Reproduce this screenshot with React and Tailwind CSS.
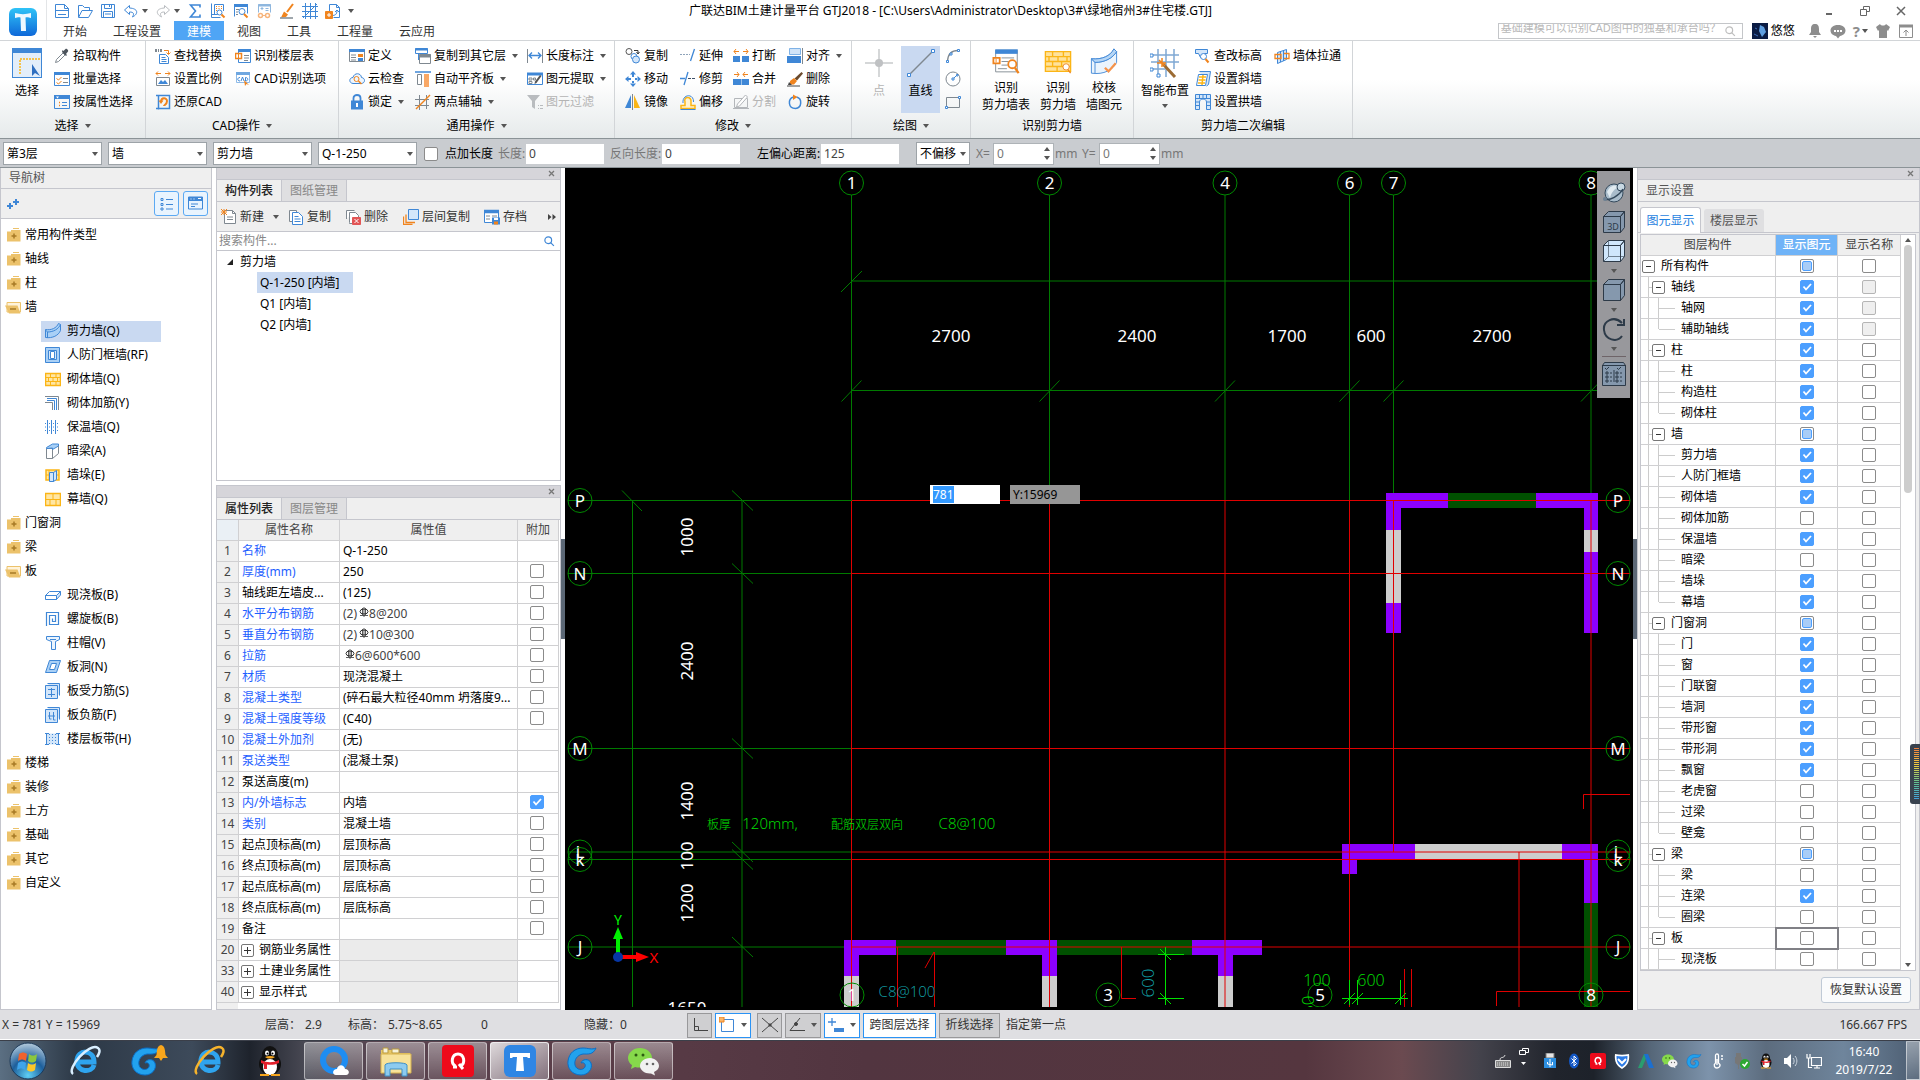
import { useEffect, useRef } from "react";

const B = "#3f87d6";
const L = "#d3e6fa";
const O = "#f0841e";
const Y = "#fbb516";
const G = "#7f8890";

// 16x16 icon drawings
const ICONS = {
  newFile: (
    <g fill="none" stroke={B}>
      <path d="M1.500 1.500h9l4 4v9h-13z" />
      <path d="M10.500 1.500v4h4M2 7.500h12M4 11.500h8" />
    </g>
  ),
  open: (
    <g fill="none" stroke={B}>
      <path d="M1.500 14V2.500h4l2 2h5v3" />
      <path d="M1.500 14.500l3.500-7h10.500l-4 7z" />
    </g>
  ),
  save: (
    <g fill="none" stroke={B}>
      <path d="M1.500 1.500h13v13h-13z" />
      <path d="M4.500 1.500v4h7v-4M3.500 14.500v-6h9v6M5 11h6M9.500 2v2" />
    </g>
  ),
  undo: (
    <path
      d="M6.500 2.500L1.500 7l5 4.500V9c4 0 5 1.500 3 5 6-3 6-8.500-3-9z"
      fill="none"
      stroke={B}
    />
  ),
  redo: (
    <path
      d="M9.500 2.500l5 4.500-5 4.500V9c-4 0-5 1.500-3 5-6-3-6-8.500 3-9z"
      fill="none"
      stroke="#b9bcc0"
    />
  ),
  sigma: (
    <path
      d="M13 4.500V2H3.500L8.500 8l-5 6H13v-2.500"
      fill="none"
      stroke={B}
      strokeWidth="1.6"
    />
  ),
  measure: (
    <g fill="none" stroke={B}>
      <path d="M1.500 .500v14h9M1.500 11.500h7M4.500 11V1.500h9V8" />
      <path d="M6.500 3v5M9 3v4M11.500 3v3" stroke={O} strokeDasharray="1 1" />
      <circle cx="9.500" cy="9.500" r="2.500" fill="#fff" />
      <path d="M11.500 11.500l3 3" stroke={O} strokeWidth="2" />
    </g>
  ),
  report: (
    <g fill="none" stroke={B}>
      <path d="M1.500 13.500V1.500h13v9" />
      <path d="M1 2.500h14" strokeWidth="3" />
      <path d="M3 6.500h3M3 9h2M3 11.500h2" stroke={G} />
      <circle cx="9" cy="8.500" r="3" fill="#fff" />
      <path d="M11 11l3.500 3.500" stroke={O} strokeWidth="2" />
    </g>
  ),
  ledger: (
    <g fill="none" stroke="#8fb7de">
      <path d="M2.500 9.500v-8h12v8" />
      <path d="M2 2.500h13" strokeWidth="2" />
      <path d="M4.500 5.500h3M6 4v3M9.500 5.500h3M9.500 7.500h3" />
      <circle cx="4.500" cy="12.500" r="2" stroke="#f6b47c" strokeWidth="1.500" />
      <circle cx="11.500" cy="12.500" r="2" stroke="#f6b47c" strokeWidth="1.500" />
      <path d="M6.500 12.500h3" stroke="#f6b47c" />
    </g>
  ),
  sweep: (
    <g fill="none">
      <path d="M14 1L8 9" stroke={O} strokeWidth="2" />
      <path d="M5 8.500l4 3-2 2.500-5 .500z" fill={O} />
      <path d="M1 15h13" stroke={G} strokeWidth="1.500" />
    </g>
  ),
  gridLines: (
    <path
      d="M0 3.500h16M0 8.500h16M0 13.500h16M3.500 0v16M8.500 0v16M13.500 0v16M1 15L15 1"
      stroke={B}
      fill="none"
    />
  ),
  addDoc: (
    <g fill="none" stroke={B}>
      <path d="M4.500 8V1.500h7l3 3v10h-6M11.500 1.500v3h3" />
      <path d="M7 12.500c3 0 5-1 5-5M10 9l2-2 2 2" />
      <path d="M.500 8.500h7v7h-7z" fill={O} stroke={O} />
      <path d="M4 10v4M2 12h4" stroke="#fff" />
    </g>
  ),
  dropper: (
    <g>
      <path d="M1.500 14.500l1-3L9 5l2 2-6.500 6.500z" fill="#fff" stroke={G} />
      <path d="M8 4l4 4 1-1-1-1 2-2.500c1-1-1.500-3.500-2.500-2.500L9.500 3l-1-1z" fill="#4c545c" />
    </g>
  ),
  batch: (
    <g fill="none" stroke={B}>
      <path d="M.500 1.500h15v13H.500z" />
      <path d="M0 2.500h16" strokeWidth="3" />
      <path d="M9 7.500h5M9 11.500h5" stroke={G} />
      <path d="M2.500 7.500l2 1.500 3-3M2.500 11.500l2 1.500 3-3" stroke={O} />
    </g>
  ),
  byProp: (
    <g fill="none" stroke={B}>
      <path d="M.500 1.500h15v13H.500z" />
      <path d="M0 3h16" strokeWidth="4" />
      <path d="M5 8.500h1M5 11.500h1" stroke={O} strokeWidth="1.500" />
      <path d="M8 8.500h5M8 11.500h5" />
      <path d="M2 2.500h3l-1.500 2z" fill="#fff" stroke="none" />
    </g>
  ),
  findReplace: (
    <g fill="none">
      <path d="M0 1h7v3H0z" fill={G} />
      <path d="M2.500 1v3M4.500 1v3" stroke="#fff" />
      <path d="M9 2.500h4.500V6M11.500 4.500l2 2 2-2" stroke={O} />
      <path d="M4.500 6.500h6l3 3v6h-9z" fill="#fff" stroke={B} />
      <path d="M6.500 9.500h4M6.500 11.500h5M6.500 13.500h5" stroke={B} />
    </g>
  ),
  ratio: (
    <g fill="none">
      <path d="M1 2.500h5M10 2.500h5M3 .500L1 2.500l2 2M13 .500l2 2-2 2" stroke={O} />
      <path d="M1.500 6.500h13v8h-13z" fill="#fff" stroke={G} />
      <path d="M3 13l3-4 2 2 2-2 3 4z" fill={B} />
    </g>
  ),
  restore: (
    <g fill="none">
      <path d="M3.500 1v14.500M1 14.500h13.500V1.500H1" stroke={B} strokeWidth="1.500" />
      <path d="M6 8c0-5 6-4.500 6-1s-3 4-3 5" stroke={O} strokeWidth="2" />
      <path d="M3.500 6.500h5L6 10z" fill={O} />
    </g>
  ),
  floorTable: (
    <g fill="none">
      <path d="M3.500 2.500h12v12h-12z" stroke={B} />
      <path d="M3 2.500h13" stroke={B} strokeWidth="3" />
      <path d="M9 7.500h5M9 10h5M9 12.500h4" stroke={G} />
      <path d="M.500 5.500h6v5h-6z" fill="#fff" stroke={O} strokeWidth="1.500" />
      <path d="M3.500 6v4" stroke={O} />
    </g>
  ),
  cadOption: (
    <g fill="none">
      <path d="M1.500 2.500h13v9h-13z" stroke="#8ebbe8" />
      <path d="M1 2.500h14" stroke="#6fa7e0" strokeWidth="3" />
      <path d="M5 6.500c-3 0-3 3.500 0 3.500M6 10l1.500-4L9 10M10.500 6.500v3.500c3 0 3-3.500 0-3.500" stroke={B} />
      <path d="M9 9l1 6 1.500-2 2.500 1z" fill={O} />
    </g>
  ),
  define: (
    <g fill="none">
      <path d="M.500 1.500h15v12H.500z" fill="#fff" stroke={G} />
      <path d="M0 2.500h16" stroke={B} strokeWidth="3" />
      <path d="M2 7h5M2 9.500h5M2 12h5" stroke={G} />
      <path d="M9 6h5v3H9z" fill={O} />
      <path d="M9 10h5v3H9z" fill={B} />
    </g>
  ),
  cloudCheck: (
    <g fill="none">
      <path d="M4 12.500c-4.500-.500-4-6 0-6 1-5 8-5 8.500 0 4 .500 4 5.500 0 6z" stroke={B} fill="#eef6fe" />
      <circle cx="7.500" cy="8" r="2.500" stroke={O} />
      <path d="M9.500 10l3 3" stroke={O} strokeWidth="1.500" />
    </g>
  ),
  lock: (
    <g fill="none">
      <path d="M4.500 7V4c0-4 7-4 7 0v3" stroke={B} strokeWidth="1.800" />
      <path d="M2 6.500h12v9H2z" fill={B} />
      <path d="M8 9v4" stroke="#fff" strokeWidth="2" />
    </g>
  ),
  copyLayer: (
    <g fill="none">
      <path d="M3.500 12V5M.500 .500h12v5H.500z" fill="#fff" stroke={B} />
      <path d="M0 1.500h13" stroke={B} strokeWidth="2" />
      <path d="M4.500 6.500h11v9h-11z" fill="#fff" stroke={G} />
      <path d="M4 8h12" stroke={G} strokeWidth="3" />
    </g>
  ),
  align: (
    <g>
      <path d="M0 1h16" stroke={B} strokeWidth="1.500" />
      <path d="M2.500 3.500h4v10h-4z" fill="#fff" stroke={G} />
      <path d="M9 3h5v13H9z" fill="#f9a866" />
    </g>
  ),
  twoPoint: (
    <g fill="none" stroke={G}>
      <path d="M0 5.500h14M0 11.500h14M4.500 1v15M11.500 1v14" />
      <path d="M1 15L15 1" stroke={O} strokeWidth="1.500" />
    </g>
  ),
  lengthDim: (
    <g fill="none" stroke={B}>
      <path d="M.500 1v14M15.500 1v14" stroke={G} />
      <path d="M2 7.500h12M5 4.500l-3 3 3 3M11 4.500l3 3-3 3" strokeWidth="1.300" />
    </g>
  ),
  extract: (
    <g fill="none">
      <path d="M.500 2.500h15v11H.500z" fill="#fff" stroke={B} />
      <path d="M0 3h16" stroke={B} strokeWidth="3" />
      <path d="M2 7h3v2H2zM2 10.500h3v2H2zM6.500 7h2v2h-2z" stroke={G} />
      <path d="M14.500 5l-5 7-2 1 .500-2.500 5-6.500z" fill="#555" />
    </g>
  ),
  filter: (
    <g fill="#b9bcbf">
      <path d="M0 1h13L8 7v8l-3-2V7z" />
      <path d="M11 11h1v1h-1zM13 11h3v1h-3zM11 14h1v1h-1zM13 14h3v1h-3z" />
    </g>
  ),
  copy: (
    <g fill="none">
      <circle cx="4" cy="3.500" r="3" stroke="#555" />
      <path d="M9 2.500h4v3M11.500 4l1.500 2 1.500-2" stroke="#333" />
      <circle cx="9" cy="8.500" r="3" stroke={B} />
      <circle cx="11" cy="11.500" r="3.500" fill={L} stroke={B} />
    </g>
  ),
  move: (
    <path
      d="M8 0l3 3.500H5zM8 16l3-3.500H5zM0 8l3.500-3v6zM16 8l-3.500-3v6zM7 3h2v3H7zM7 10h2v3H7zM3 7h3v2H3zM10 7h3v2h-3z"
      fill={B}
    />
  ),
  mirror: (
    <g>
      <path d="M6 1v13H0z" fill={B} />
      <path d="M9 1v13h6z" fill={Y} />
      <path d="M7.500 0v16" stroke={G} />
    </g>
  ),
  extend: (
    <g fill="none" stroke={B}>
      <path d="M0 6.500h10" stroke="#8fa4ba" strokeDasharray="2 1" />
      <path d="M14.500 1l-4 12" strokeWidth="1.300" />
    </g>
  ),
  trim: (
    <g fill="none" stroke="#3d5068">
      <path d="M8 1L4 14M0 7.500h5" stroke={B} strokeWidth="1.300" />
      <path d="M8 7.500h8" strokeDasharray="3 1" />
    </g>
  ),
  offset: (
    <g fill="none">
      <path d="M1 11.500h4V8C3 2 12 2 11 8v3.500h4v3H1z" stroke={Y} strokeWidth="1.500" fill="#fff3d2" />
      <path d="M.500 15.500h15M3 9c-1-9 11-10 10.500-1" stroke={B} />
    </g>
  ),
  breakIt: (
    <g>
      <path d="M0 8h7v6H0zM9 8h7v6H9z" fill={B} />
      <path d="M1 3.500h5M10 3.500h5M3 1L1 3.500 3 6M13 1l2 2.500L13 6" stroke={O} fill="none" />
    </g>
  ),
  merge: (
    <g>
      <path d="M0 8h8v6H0zM8.500 8H16v6H8.500z" fill={B} />
      <path d="M1 3.500h5M10 3.500h5M4 1l2 2.500L4 6M12 1l-2 2.500L12 6" stroke={O} fill="none" />
    </g>
  ),
  split: (
    <g fill="none" stroke="#b3b6ba">
      <path d="M1.500 4.500h13v9h-13z" />
      <path d="M12.500 1l2 2-8 9-3 1 1-3z" fill="#fff" />
      <path d="M0 14.500h16" />
    </g>
  ),
  alignTo: (
    <g>
      <path d="M2.500 .500h11v6h-11z" fill="#cfe3f8" stroke="#7fb2e6" />
      <path d="M0 8h14v7H0z" fill={B} />
      <path d="M15.500 0v16" stroke={G} />
    </g>
  ),
  erase: (
    <g>
      <path d="M14.500 1l1.500 1.500-6 7-2.500-2z" fill="#6b4a2c" />
      <path d="M3 10l4-3 3 3-3 3.500H3z" fill={O} />
      <path d="M2 11l3 3H1z" fill="#444" />
      <path d="M0 15h13" stroke="#444" />
    </g>
  ),
  rotate: (
    <g fill="none">
      <path d="M9.500 3C15.500 4.500 15 14 8.500 14.500 1 14.500 .500 5 6.500 3" stroke={B} strokeWidth="1.500" />
      <path d="M6 .500L10.500 3 6 6z" fill={O} />
    </g>
  ),
  arc: (
    <g fill="none">
      <path d="M2.500 13C3 6 7 2.500 13 2.500" stroke={G} strokeWidth="1.300" />
      <path d="M1.500 12.500h2v2h-2zM12.500 1.500h2v2h-2zM5 5h2v2H5z" fill="#fff" stroke={B} />
    </g>
  ),
  circle: (
    <g fill="none">
      <circle cx="8" cy="8" r="7" stroke={G} />
      <path d="M8 8l4-4" stroke={B} />
      <path d="M7 7h2v2H7zM11.500 3.500h1.500v1.500h-1.500z" fill="#fff" stroke={B} />
    </g>
  ),
  rect: (
    <g fill="none">
      <path d="M1.500 3.500h13v10h-13z" stroke={G} />
      <path d="M.500 12.500h2v2h-2zM13.500 2.500h2v2h-2z" fill="#fff" stroke={B} />
    </g>
  ),
  height: (
    <g fill="none">
      <path d="M.500 1.500h12v4h-3l-2 4h-2l-2-4h-3z" fill={L} stroke={B} />
      <circle cx="8.500" cy="8.500" r="3" fill="#fff" stroke={B} />
      <path d="M10.500 11l3 3.500" stroke={O} strokeWidth="2" />
    </g>
  ),
  slant: (
    <g fill="none">
      <path d="M4.500 .500h11l-2 13-2 1.500" fill={L} stroke={B} />
      <path d="M3.500 3.500h9l-2 11h-9z" fill="#fff" stroke={B} />
      <path d="M4 6h7M3.500 9h7M3 12h7M8 4l-1 10" stroke={Y} strokeWidth="1.500" />
    </g>
  ),
  archWall: (
    <g fill="none">
      <path d="M.500 15.500V.500h15v15h-4V8c0-4-7-4-7 0v7.500z" fill={L} stroke={B} />
      <path d="M1 4.500h14M4.500 1v4M8 1v4M11.500 1v4M1 8h3M1 11.500h3M12 8h3M12 11.500h3" stroke={B} />
    </g>
  ),
  wallThrough: (
    <g fill="none" stroke={B}>
      <path d="M3.500 4.500L12.500 1.500v10l-9 4z" fill={L} />
      <path d="M6.500 3v11M9.500 2v11" />
      <path d="M1 6.500h6v4H1zM10 5.500h5v5h-5" stroke={O} strokeWidth="1.300" />
    </g>
  ),
  shear: (
    <g>
      <path d="M.500 6.500c6 1 11-1.500 13-6l2 1v6c-2 5-8 8-15 7z" fill="#a9d0f6" stroke={B} />
      <path d="M.500 7l2 2c6 0 11-3 13-7.500M2.500 9v6" fill="none" stroke={B} />
    </g>
  ),
  frameDoor: (
    <g fill="#a9d0f6" stroke={B}>
      <path d="M.500 .500h14v15H.500z" />
      <path d="M3.500 3.500h8v9h-8z" fill={L} />
      <path d="M5.500 4.500h4v7h-4z" fill="#fff" />
    </g>
  ),
  brick: (
    <g fill="#ffe6a3" stroke={Y}>
      <path d="M.500 2.500h15v12H.500z" strokeWidth="1.500" />
      <path d="M1 6.500h14M1 10.500h14M5.500 3v3.500M11 3v3.500M8 6.500v4M3.500 6.500v4M12.500 6.500v4M5.500 10.500v4M11 10.500v4" />
    </g>
  ),
  brickBar: (
    <g fill="none">
      <path d="M0 1.500h13.500V15M0 7.500h7.500V15" stroke={G} />
      <path d="M2 3.500h9.500V15M2 5.500h7.500V15" stroke={B} />
    </g>
  ),
  insulate: (
    <g fill="none" stroke={B}>
      <path d="M2.500 1v14M6.500 1v14M10.500 1v14" />
      <path d="M0 4.500h13M0 8h13M0 11.500h13" strokeDasharray="1 1" />
    </g>
  ),
  hiddenBeam: (
    <g fill="#fff">
      <path d="M1.500 5.500h6v10h-6z" stroke={G} />
      <path d="M7.500 5.500l6-4v9l-6 5z" stroke={G} />
      <path d="M1.500 5.500v-1l6-3.500h6v2l-6 3.500v-1.500z" fill="#a9d0f6" stroke={B} />
    </g>
  ),
  pier: (
    <g>
      <path d="M1 3h13v10H1z" fill="#ffe6a3" stroke={Y} strokeWidth="1.500" />
      <path d="M1 8h13M4 3v10" stroke={Y} />
      <path d="M4.500 5.500h4v9h-4zM8.500 5.500l3-2v9l-3 2z" fill={L} stroke={B} />
    </g>
  ),
  curtain: (
    <g fill="#ffe6a3" stroke={Y}>
      <path d="M.500 2.500h15v12H.500z" strokeWidth="1.500" />
      <path d="M1 8.500h14M8 3v5.500M5 8.500v6M11 8.500v6" />
    </g>
  ),
  slab: (
    <g fill="#fff" stroke={B}>
      <path d="M.500 8.500l4-4h11l-4 4zM.500 8.500h11v4H.500z" />
      <path d="M11.500 8.500l4-4v3.500l-4 4.500z" fill={L} />
    </g>
  ),
  spiral: (
    <g fill="none" stroke={B}>
      <path d="M1.500 15V1.500h12v12h-9v-9h6v6h-3v-3" strokeWidth="1.200" />
    </g>
  ),
  cap: (
    <path d="M1.500 1.500h13v3l-4 2v8h-4v-8l-5-2zM5 4.500h6" fill="#eaf4fe" stroke={B} />
  ),
  slabHole: (
    <g stroke={B}>
      <path d="M4.500 1.500h11l-4 12h-11z" fill="#a9d0f6" />
      <path d="M6.500 4.500h5l-2 6h-5z" fill="#fff" />
    </g>
  ),
  slabBar: (
    <g fill={L} stroke={B}>
      <path d="M2.500 .500h12v12" />
      <path d="M.500 2.500h12v13H.500z" />
      <path d="M3 6.500h7M3 11.500h7M6.500 5v9" />
    </g>
  ),
  negBar: (
    <g fill={L} stroke={B}>
      <path d="M2.500 .500h12v12" />
      <path d="M.500 2.500h12v13H.500z" />
      <path d="M4.500 5v7h2M8.500 5v8h2M3 9h7" />
    </g>
  ),
  strip: (
    <g fill={L} stroke={B}>
      <path d="M1.500 2.500h12v11h-12z" stroke="none" />
      <path d="M1.500 2v12M13.500 2v12M0 2.500h4M0 13.500h4M11 2.500h4M11 13.500h4" />
      <path d="M7.500 3v10M4.500 3v10M10.500 3v10" strokeDasharray="1 2" />
    </g>
  ),
  folder: (
    <g>
      <path d="M8 1h6v1H8zM6 3h9.500v11.500H2V4.500h4z" fill="#ecc26b" />
      <path d="M9 6.500v5M6.500 9h5" stroke="#a77a26" strokeWidth="1.500" />
    </g>
  ),
  folderOpen: (
    <g>
      <path d="M2 3.500h13.500V13H2z" fill="#fff3da" stroke="#ecc26b" />
      <path d="M0 6.500h12.500l3 8H4z" fill="#ecc26b" />
      <path d="M5 10h6" stroke="#a77a26" strokeWidth="1.500" />
    </g>
  ),
  newItem: (
    <g fill="none">
      <path d="M3.500 1.500h8l3 3v10h-11z" fill="#fff" stroke={G} />
      <path d="M11.500 1.500v3h3M6 8h6M6 10.500h6" stroke={G} />
      <path d="M0 0l6 6M6 0L0 6M3 0v6M0 3h6" stroke={O} />
    </g>
  ),
  copyDoc: (
    <g fill="#fff" stroke={B}>
      <path d="M1.500 1.500h7v11h-7z" stroke={G} />
      <path d="M4.500 3.500h6l4 4v8h-10z" />
      <path d="M6.500 7.500h4M6.500 10h6M6.500 12.500h6" />
    </g>
  ),
  deleteDoc: (
    <g fill="#fff" stroke={G}>
      <path d="M1.500 10V1.500h8" />
      <path d="M4.500 13.500v-10h6l3 3v8h-9z" />
      <path d="M7.500 8.500h8v7h-8z" fill="#e25555" stroke="#e25555" />
      <path d="M9.500 10l4 4M13.500 10l-4 4" stroke="#fff" />
    </g>
  ),
  layerCopy: (
    <g fill="none">
      <path d="M5.500 .500h10v10h-10z" fill={L} stroke={B} />
      <path d="M3 5.500v8h9M.500 7.500v8h9" stroke={O} strokeWidth="1.300" />
    </g>
  ),
  archive: (
    <g fill="none">
      <path d="M.500 1.500h14v12H.500z" fill="#fff" stroke={B} />
      <path d="M0 2.500h15" stroke={B} strokeWidth="3.500" />
      <path d="M2 7h4M2 10h4M8 7h5" stroke={G} />
      <path d="M8 8.500h8v7H8z" fill={B} />
      <path d="M10 12.500h4v3h-4z" fill={O} />
      <path d="M10 9h4v2h-4z" fill="#fff" />
    </g>
  ),
  search: (
    <g fill="none" stroke={B} strokeWidth="1.600">
      <circle cx="7" cy="7" r="4.500" />
      <path d="M10.500 10.500l4 4" />
    </g>
  ),
};

function Icon({ name, className = "size-4" }) {
  return (
    <svg viewBox="0 0 16 16" className={`shrink-0 ${className}`} aria-hidden="true">
      {ICONS[name]}
    </svg>
  );
}

function Caret({ className = "" }) {
  return (
    <svg viewBox="0 0 6 4" className={`w-[6px] h-1 shrink-0 ${className}`} aria-hidden="true">
      <path d="M0 0h6L3 4z" fill="#555" />
    </svg>
  );
}

function CheckBox({ checked = false, partial = false, disabled = false, label }) {
  return (
    <span className="inline-grid place-items-center size-[14px]">
      <input
        type="checkbox"
        aria-label={label}
        defaultChecked={checked}
        disabled={disabled}
        className="peer col-start-1 row-start-1 appearance-none size-[14px] rounded-[2px] border border-[#8b8b8b] bg-white checked:bg-[#4c9fff] checked:border-[#4c9fff] disabled:bg-[#efefef] disabled:border-[#b5b5b5]"
      />
      {partial && (
        <span className="col-start-1 row-start-1 size-[10px] rounded-[2px] border border-[#4c9fff] bg-[#a9cdf7] pointer-events-none"></span>
      )}
      <svg
        viewBox="0 0 10 10"
        className="col-start-1 row-start-1 size-[10px] invisible peer-checked:visible pointer-events-none"
      >
        <path d="M1.500 4.500L4 7.500l5-5.500" fill="none" stroke="#fff" strokeWidth="1.800" />
      </svg>
    </span>
  );
}

function Tool({ icon, text, arrow, disabled }) {
  return (
    <button
      disabled={disabled}
      className="flex items-center gap-[3px] h-[23px] whitespace-nowrap disabled:text-[#b4b4b4]"
    >
      <Icon name={icon} />
      {text}
      {arrow && <Caret className="ml-[3px]" />}
    </button>
  );
}

function ToolColumn({ tools, className = "" }) {
  return (
    <div className={`flex flex-col items-start shrink-0 ${className}`}>
      {tools.map((tool) => (
        <Tool key={tool.text} {...tool} />
      ))}
    </div>
  );
}

function BigTool({ lines, className = "", arrow, disabled, children }) {
  return (
    <button
      disabled={disabled}
      className={`flex flex-col items-center shrink-0 h-[67px] mt-[2px] whitespace-nowrap disabled:text-[#b4b4b4] ${className}`}
    >
      <svg viewBox="0 0 30 30" className="size-[30px] mt-[2px] mb-1" aria-hidden="true">
        {children}
      </svg>
      {lines.map((line) => (
        <span key={line} className="leading-[17px]">
          {line}
        </span>
      ))}
      {arrow && <Caret className="mt-[5px]" />}
    </button>
  );
}

function Group({ title, arrow, className, children }) {
  return (
    <section className={`flex flex-col shrink-0 border-r border-[#d2d5d8] pt-[3px] ${className}`}>
      <div className="flex h-[69px]">{children}</div>
      <h2 className="flex items-center justify-center gap-[6px] h-[26px]">
        {title}
        {arrow && <Caret />}
      </h2>
    </section>
  );
}

const QUICK = ["newFile", "open", "save", "undo", "redo", "sigma", "measure", "report", "ledger", "sweep", "gridLines", "addDoc"];
const MENU = ["开始", "工程设置", "建模", "视图", "工具", "工程量", "云应用"];

function Header() {
  return (
    <header className="flex h-[41px] bg-white border-b border-[#d2d5d8]">
      <div className="w-[47px] shrink-0 border-r border-[#e3e5e7] pl-[9px] pt-2">
        <svg viewBox="0 0 28 28" className="size-7">
          <defs>
            <linearGradient id="logo" x1="0" y1="0" x2="0" y2="1">
              <stop offset="0" stopColor="#2fc3f7" />
              <stop offset="1" stopColor="#0f68d8" />
            </linearGradient>
          </defs>
          <rect width="28" height="28" rx="6" fill="url(#logo)" />
          <path d="M6 5c5 1.500 11 1.500 16 0v5c-2 0-3-1-5.500-.500L17 23h-5l-.500-13.500C9 9 8 10 6 10z" fill="#eef8ff" />
        </svg>
      </div>
      <div className="flex-1 flex flex-col min-w-0">
        <div className="flex items-center h-[21px]">
          <div className="flex items-center gap-[7px] w-[642px] pl-[7px] shrink-0">
            {QUICK.map((name) => (
              <button key={name} aria-label={name} className="flex items-center gap-[3px]">
                <Icon name={name} />
                {(name === "undo" || name === "redo") && <Caret />}
              </button>
            ))}
            <Caret />
          </div>
          <h1 className="whitespace-nowrap">
            广联达BIM土建计量平台 GTJ2018 - [C:\Users\Administrator\Desktop\3#\绿地宿州3#住宅楼.GTJ]
          </h1>
          <div className="flex-1 flex justify-end items-center gap-[26px] pr-[14px]">
            <button aria-label="最小化">
              <svg viewBox="0 0 10 10" className="size-[10px]">
                <path d="M2 8h6" stroke="#666" strokeWidth="2" />
              </svg>
            </button>
            <button aria-label="还原">
              <svg viewBox="0 0 10 10" className="size-[10px]">
                <path d="M3.500 3.500v-3h6v5h-3M.500 3.500h6v6h-6z" fill="none" stroke="#666" />
              </svg>
            </button>
            <button aria-label="关闭">
              <svg viewBox="0 0 10 10" className="size-[10px]">
                <path d="M1 1l8 8M9 1L1 9" stroke="#666" strokeWidth="1.500" />
              </svg>
            </button>
          </div>
        </div>
        <div className="flex items-center">
          <nav className="flex pl-[3px]">
            {MENU.map((item) => (
              <a
                key={item}
                href="#"
                className={`px-[13px] h-[19px] leading-[21px] ${item === "建模" ? "bg-[#4fa5f5] text-white" : "text-[#333]"}`}
              >
                {item}
              </a>
            ))}
          </nav>
          <div className="ml-auto flex items-center pr-[6px] h-[19px]">
            <div className="flex items-center w-[245px] h-4 border border-[#c4c6c9]">
              <input
                aria-label="搜索"
                placeholder="基础建模可以识别CAD图中的独基和承台吗？"
                className="flex-1 min-w-0 h-[14px] pl-[2px] pb-[6px] text-[11px] outline-none placeholder:text-[#b8b8b8]"
              />
              <Icon name="search" className="size-3 mr-[6px] opacity-50 grayscale" />
            </div>
            <svg viewBox="0 0 16 16" className="size-4 ml-[9px]">
              <rect width="16" height="16" fill="#0b1c44" />
              <path d="M8 2l4 2 2 5-4 5-3-6z" fill="#5f9fe0" />
              <path d="M2 11l4 2M3 5l2 1" stroke="#3d6bb5" />
            </svg>
            <span className="ml-[3px] w-[36px]">悠悠</span>
            <div className="flex items-center gap-[7px]">
              <svg viewBox="0 0 16 16" className="size-4" fill="#8d8d8d">
                <path d="M8 1c-3 0-4 2-4 5v3l-2 3h12l-2-3V6c0-3-1-5-4-5zM6 13h4l-2 2z" />
              </svg>
              <svg viewBox="0 0 16 16" className="size-4" fill="#8d8d8d">
                <path d="M8 2C3 2 .500 4.500 .500 7.500S3 12.500 6 13l2 2.500 2-2.500c3-.500 5.500-2.500 5.500-5.500S13 2 8 2z" />
                <path d="M4 7h2v2H4zM7 7h2v2H7zM10 7h2v2h-2z" fill="#fff" />
              </svg>
              <span className="flex items-center text-[15px] font-bold text-[#8d8d8d] leading-4">
                ?<Caret className="ml-[2px]" />
              </span>
              <svg viewBox="0 0 16 16" className="size-4" fill="#8d8d8d">
                <path d="M5 1L1 4l2 4 1-1v8h8V7l1 1 2-4-4-3c-1 2-5 2-6 0z" />
              </svg>
              <svg viewBox="0 0 16 16" className="size-4" fill="none" stroke="#8d8d8d">
                <path d="M1.500 2.500h13v12h-13z" />
                <path d="M1 3h14" strokeWidth="3" />
                <path d="M8 13V7M5.500 9.500L8 7l2.500 2.500" />
              </svg>
            </div>
          </div>
        </div>
      </div>
    </header>
  );
}

function Ribbon() {
  return (
    <div className="flex h-[97px] bg-gradient-to-b from-white from-40% to-[#e6eaeb] overflow-hidden">
      <Group title="选择" arrow className="w-[146px]">
        <BigTool lines={["选择"]} className="w-[54px]">
          <rect x=".5" y=".5" width="29" height="29" fill="#e3eefa" stroke={B} />
          <rect width="30" height="5" fill={B} />
          <path d="M8 26V11h20" fill="none" stroke={Y} strokeWidth="1.500" strokeDasharray="2 1" />
          <path d="M20 16v12l3-3 5 3z" fill="#2f6fc0" />
        </BigTool>
        <ToolColumn
          tools={[
            { icon: "dropper", text: "拾取构件" },
            { icon: "batch", text: "批量选择" },
            { icon: "byProp", text: "按属性选择" },
          ]}
        />
      </Group>
      <Group title="CAD操作" arrow className="w-[193px]">
        <ToolColumn
          className="w-[89px] pl-[9px]"
          tools={[
            { icon: "findReplace", text: "查找替换" },
            { icon: "ratio", text: "设置比例" },
            { icon: "restore", text: "还原CAD" },
          ]}
        />
        <ToolColumn
          tools={[
            { icon: "floorTable", text: "识别楼层表" },
            { icon: "cadOption", text: "CAD识别选项" },
          ]}
        />
      </Group>
      <Group title="通用操作" arrow className="w-[276px]">
        <ToolColumn
          className="w-[76px] pl-[10px]"
          tools={[
            { icon: "define", text: "定义" },
            { icon: "cloudCheck", text: "云检查" },
            { icon: "lock", text: "锁定", arrow: true },
          ]}
        />
        <ToolColumn
          className="w-[112px]"
          tools={[
            { icon: "copyLayer", text: "复制到其它层", arrow: true },
            { icon: "align", text: "自动平齐板", arrow: true },
            { icon: "twoPoint", text: "两点辅轴", arrow: true },
          ]}
        />
        <ToolColumn
          tools={[
            { icon: "lengthDim", text: "长度标注", arrow: true },
            { icon: "extract", text: "图元提取", arrow: true },
            { icon: "filter", text: "图元过滤", disabled: true },
          ]}
        />
      </Group>
      <Group title="修改" arrow className="w-[237px]">
        <ToolColumn
          className="w-[65px] pl-[10px]"
          tools={[
            { icon: "copy", text: "复制" },
            { icon: "move", text: "移动" },
            { icon: "mirror", text: "镜像" },
          ]}
        />
        <ToolColumn
          className="w-[53px]"
          tools={[
            { icon: "extend", text: "延伸" },
            { icon: "trim", text: "修剪" },
            { icon: "offset", text: "偏移" },
          ]}
        />
        <ToolColumn
          className="w-[54px]"
          tools={[
            { icon: "breakIt", text: "打断" },
            { icon: "merge", text: "合并" },
            { icon: "split", text: "分割", disabled: true },
          ]}
        />
        <ToolColumn
          tools={[
            { icon: "alignTo", text: "对齐", arrow: true },
            { icon: "erase", text: "删除" },
            { icon: "rotate", text: "旋转" },
          ]}
        />
      </Group>
      <Group title="绘图" arrow className="w-[119px]">
        <BigTool lines={["点"]} disabled className="w-[34px] ml-[10px]">
          <path d="M15 1v28M1 15h28" stroke="#c8cacc" strokeWidth="1.500" />
          <circle cx="15" cy="15" r="4" fill="#bfc1c3" />
        </BigTool>
        <BigTool lines={["直线"]} className="w-[39px] mx-[5px] bg-[#c9d9f1]">
          <path d="M3 27L27 3" stroke={G} strokeWidth="1.500" />
          <path d="M1.500 25.500h3v3h-3zM25.500 1.500h3v3h-3z" fill="#fff" stroke={B} />
        </BigTool>
        <div className="flex flex-col">
          {["arc", "circle", "rect"].map((name) => (
            <button key={name} aria-label={name} className="flex items-center h-[23px]">
              <Icon name={name} />
            </button>
          ))}
        </div>
      </Group>
      <Group title="识别剪力墙" className="w-[163px]">
        <BigTool lines={["识别", "剪力墙表"]} className="w-[54px] ml-2">
          <path d="M3.500 2.500h24v24h-24z" fill="#fff" stroke={G} />
          <path d="M3 4h25" stroke={B} strokeWidth="5" />
          <path d="M10 11h14M10 15h8M10 19h7M6 23h10" stroke={G} />
          <path d="M1 11h7v6H1z" fill="#fff" stroke={O} strokeWidth="2" />
          <path d="M4 12v4" stroke={O} />
          <circle cx="22" cy="18" r="4.500" fill="#fff" stroke={O} strokeWidth="2" />
          <path d="M25 22l4 6" stroke={O} strokeWidth="2.500" />
        </BigTool>
        <BigTool lines={["识别", "剪力墙"]} className="w-[50px]">
          <path d="M1 4h28v22H1z" fill="#ffe29a" stroke={Y} strokeWidth="1.500" />
          <path d="M1 9.500h28M1 15h28M1 20.500h28M9 4v5.500M21 4v5.500M15 9.500V15M5 9.500V15M25 9.500V15M9 15v5.500M19 15v5.500M14 20.500V26" stroke={Y} strokeWidth="1.500" />
          <circle cx="24" cy="21" r="3.500" fill="#fff" stroke={O} />
          <path d="M26 24l3 4" stroke={O} strokeWidth="1.500" />
        </BigTool>
        <BigTool lines={["校核", "墙图元"]} className="w-[42px]">
          <path d="M1 12C13 13 22 9 26 1l3 3v12c-4 8-14 14-28 12z" fill="#eaf4fd" stroke={B} />
          <path d="M1 12l4 4C16 16 25 11 29 4M5 16v12" fill="none" stroke={B} />
          <path d="M1 12C13 13 22 9 26 1l3 3C25 11 16 16 5 16z" fill="#b5d6f6" stroke={B} />
          <path d="M16 22l4 4 8-9" fill="none" stroke="#f6934a" strokeWidth="2.500" />
        </BigTool>
      </Group>
      <Group title="剪力墙二次编辑" className="w-[219px]">
        <BigTool lines={["智能布置"]} arrow className="w-[54px] ml-1 mr-[3px]">
          <path d="M1 7h28M1 14h28M1 21h14M8 1v28M16 1v28M24 1v20" stroke="#7fa8d4" strokeWidth="1.500" fill="none" />
          <path d="M0 6h3v3H0zM0 20h3v3H0zM7 26h3v3H7z" fill="#fff" stroke={B} />
          <path d="M13 16l12 13" stroke="#9c6b33" strokeWidth="3" />
          <path d="M12 10v9M7 15h9M9 12l6 6" stroke={O} strokeWidth="1.500" />
        </BigTool>
        <ToolColumn
          className="w-[79px]"
          tools={[
            { icon: "height", text: "查改标高" },
            { icon: "slant", text: "设置斜墙" },
            { icon: "archWall", text: "设置拱墙" },
          ]}
        />
        <ToolColumn tools={[{ icon: "wallThrough", text: "墙体拉通" }]} />
      </Group>
    </div>
  );
}

function Select({ label, value, className }) {
  return (
    <span className={`inline-grid items-center h-[23px] shrink-0 ${className}`}>
      <select
        aria-label={label}
        className="col-start-1 row-start-1 appearance-none w-full h-[23px] pl-[3px] bg-white border border-[#9da3a8]"
      >
        <option>{value}</option>
      </select>
      <Caret className="col-start-1 row-start-1 justify-self-end mr-1 pointer-events-none" />
    </span>
  );
}

function Spinner({ id }) {
  return (
    <span className="flex items-center w-[61px] h-[22px] bg-white border border-[#aeb3b7]">
      <input id={id} defaultValue="0" className="flex-1 min-w-0 pl-[3px] text-[#777] outline-none" />
      <span className="flex flex-col gap-[5px] pr-[3px]">
        <Caret className="rotate-180" />
        <Caret />
      </span>
    </span>
  );
}

function OptionsBar() {
  return (
    <div className="flex items-center h-[30px] bg-[#c9ccd0] border-y border-[#8b9397] pt-px pl-[3px] text-[#777]">
      <div className="flex gap-[6px] text-black">
        <Select label="楼层" value="第3层" className="w-[99px]" />
        <Select label="构件大类" value="墙" className="w-[99px]" />
        <Select label="构件类型" value="剪力墙" className="w-[99px]" />
        <Select label="构件" value="Q-1-250" className="w-[99px]" />
      </div>
      <label className="flex items-center gap-[7px] ml-[7px] text-black">
        <CheckBox />
        点加长度
      </label>
      <label htmlFor="len" className="ml-[5px] w-7">长度:</label>
      <input id="len" defaultValue="0" className="w-[78px] h-5 pl-[3px] bg-white text-[#444]" />
      <label htmlFor="rlen" className="ml-[6px] w-[52px]">反向长度:</label>
      <input id="rlen" defaultValue="0" className="w-[78px] h-5 pl-[3px] bg-white text-[#444]" />
      <label htmlFor="ecc" className="ml-[17px] w-[64px] text-black">左偏心距离:</label>
      <input id="ecc" defaultValue="125" className="w-[78px] h-5 pl-[3px] bg-white text-[#444]" />
      <Select label="偏移" value="不偏移" className="w-[54px] ml-[17px] text-black" />
      <label htmlFor="ox" className="ml-[6px] w-[17px]">X=</label>
      <Spinner id="ox" />
      <span className="ml-px w-[27px]">mm</span>
      <label htmlFor="oy" className="w-[17px]">Y=</label>
      <Spinner id="oy" />
      <span className="ml-px">mm</span>
    </div>
  );
}

const NAV = [
  ["folder", "常用构件类型"],
  ["folder", "轴线"],
  ["folder", "柱"],
  ["folderOpen", "墙"],
  ["shear", "剪力墙(Q)", true],
  ["frameDoor", "人防门框墙(RF)", true],
  ["brick", "砌体墙(Q)", true],
  ["brickBar", "砌体加筋(Y)", true],
  ["insulate", "保温墙(Q)", true],
  ["hiddenBeam", "暗梁(A)", true],
  ["pier", "墙垛(E)", true],
  ["curtain", "幕墙(Q)", true],
  ["folder", "门窗洞"],
  ["folder", "梁"],
  ["folderOpen", "板"],
  ["slab", "现浇板(B)", true],
  ["spiral", "螺旋板(B)", true],
  ["cap", "柱帽(V)", true],
  ["slabHole", "板洞(N)", true],
  ["slabBar", "板受力筋(S)", true],
  ["negBar", "板负筋(F)", true],
  ["strip", "楼层板带(H)", true],
  ["folder", "楼梯"],
  ["folder", "装修"],
  ["folder", "土方"],
  ["folder", "基础"],
  ["folder", "其它"],
  ["folder", "自定义"],
];

function NavTree() {
  return (
    <aside className="flex flex-col w-[212px] shrink-0 border border-t-0 border-[#c5c6cd] bg-white">
      <h2 className="h-[21px] leading-5 pl-2 bg-[#efefef] border-b border-[#c5c6cd] text-[#555]">导航树</h2>
      <div className="flex items-center gap-1 h-[30px] pl-[6px] pr-[3px] bg-[#efefef] border-b border-[#c5c6cd]">
        <svg viewBox="0 0 12 12" className="size-3 mr-auto">
          <path d="M0 8h6M3 5v6M6 4h6M9 1v6" stroke={B} strokeWidth="2" />
        </svg>
        <button aria-label="列表" className="grid place-items-center size-[25px] rounded-[3px] border border-[#5ba9f3] bg-[#e9f4fe]">
          <svg viewBox="0 0 14 14" className="size-[14px]" fill="none" stroke={B}>
            <path d="M1 1.500h2v2H1zM1 6.500h2v2H1zM1 11h2v2H1zM6 2.500h7M6 7.500h7M6 12h7" />
          </svg>
        </button>
        <button aria-label="详细" className="grid place-items-center size-[25px] rounded-[3px] border border-[#5ba9f3] bg-[#e9f4fe]">
          <svg viewBox="0 0 15 14" className="size-[15px]" fill="none" stroke={B}>
            <path d="M.500 .500h14v12H.500z" />
            <path d="M0 2.500h15" strokeWidth="4" />
            <path d="M3 2v1M6 2v1M10 2h3" stroke="#fff" />
            <path d="M3 7.500h7M3 10h4" />
          </svg>
        </button>
      </div>
      <ul className="pt-1">
        {NAV.map(([icon, text, child]) => (
          <li key={text} className={`flex items-center h-6 ${child ? "pl-10" : "pl-1"}`}>
            <a
              href="#"
              className={`flex items-center h-[21px] ${child ? "gap-[6px] w-[120px] pl-1" : "gap-1"} ${
                icon === "shear" ? "bg-[#c9d9f1]" : ""
              }`}
            >
              <Icon name={icon} />
              <span className="whitespace-nowrap">{text}</span>
            </a>
          </li>
        ))}
      </ul>
    </aside>
  );
}

function DockStrip() {
  return (
    <div className="flex justify-end items-center h-3 pr-[5px] bg-[#d6d5da] border-b border-[#c5c6cd]">
      <button aria-label="关闭面板">
        <svg viewBox="0 0 7 7" className="size-[7px]">
          <path d="M1 1l5 5M6 1L1 6" stroke="#777" strokeWidth="1.300" />
        </svg>
      </button>
    </div>
  );
}

function DockTabs({ tabs }) {
  return (
    <div className="flex h-[22px] bg-[#efefef] border-b border-[#c5c6cd]">
      {tabs.map((tab, index) => (
        <button
          key={tab}
          className={`w-[65px] border-r border-[#c5c6cd] ${index === 0 ? "font-medium text-[#222]" : "bg-[#dfdfe1] text-[#888]"}`}
        >
          {tab}
        </button>
      ))}
    </div>
  );
}

function ComponentList() {
  return (
    <section className="flex flex-col h-[313px] shrink-0 border border-t-0 border-[#c5c6cd] bg-white">
      <DockStrip />
      <DockTabs tabs={["构件列表", "图纸管理"]} />
      <div className="flex items-center h-[30px] pl-1 pr-1 bg-[#efefef] border-b border-[#c5c6cd] text-[#333] whitespace-nowrap">
        <button className="flex items-center gap-[3px] w-[67px]">
          <Icon name="newItem" />
          新建
          <Caret className="ml-[6px]" />
        </button>
        <button className="flex items-center gap-[3px] w-[57px]">
          <Icon name="copyDoc" />
          复制
        </button>
        <button className="flex items-center gap-[3px] w-[58px]">
          <Icon name="deleteDoc" />
          删除
        </button>
        <button className="flex items-center gap-[3px] w-[81px]">
          <Icon name="layerCopy" />
          层间复制
        </button>
        <button className="flex items-center gap-[3px]">
          <Icon name="archive" />
          存档
        </button>
        <svg viewBox="0 0 8 6" className="w-2 h-[6px] ml-auto">
          <path d="M0 0l3.500 3L0 6zM4.500 0L8 3 4.500 6z" fill="#444" />
        </svg>
      </div>
      <div className="flex items-center h-[19px] border-b border-[#c5c6cd]">
        <input aria-label="搜索构件" placeholder="搜索构件..." className="flex-1 pl-[2px] outline-none placeholder:text-[#888]" />
        <Icon name="search" className="size-3 mr-[5px]" />
      </div>
      <ul className="leading-[21px]">
        <li className="flex items-center pl-[10px] gap-[7px]">
          <svg viewBox="0 0 6 6" className="size-[6px]">
            <path d="M6 0v6H0z" fill="#222" />
          </svg>
          剪力墙
        </li>
        <li className="ml-[40px] pl-[3px] w-[96px] bg-[#c9d9f1]">Q-1-250 [内墙]</li>
        <li className="ml-[40px] pl-[3px]">Q1 [内墙]</li>
        <li className="ml-[40px] pl-[3px]">Q2 [内墙]</li>
      </ul>
    </section>
  );
}

// no, name, value, blue name, has checkbox, checked
const PROPS = [
  [1, "名称", "Q-1-250", true, false],
  [2, "厚度(mm)", "250", true, true],
  [3, "轴线距左墙皮...", "(125)", false, true],
  [4, "水平分布钢筋", ["(2)", "8@200"], true, true],
  [5, "垂直分布钢筋", ["(2)", "10@300"], true, true],
  [6, "拉筋", ["", "6@600*600"], true, true],
  [7, "材质", "现浇混凝土", true, true],
  [8, "混凝土类型", "(碎石最大粒径40mm 坍落度9...", true, true],
  [9, "混凝土强度等级", "(C40)", true, true],
  [10, "混凝土外加剂", "(无)", true, false],
  [11, "泵送类型", "(混凝土泵)", true, false],
  [12, "泵送高度(m)", "", false, false],
  [13, "内/外墙标志", "内墙", true, true, true],
  [14, "类别", "混凝土墙", true, true],
  [15, "起点顶标高(m)", "层顶标高", false, true],
  [16, "终点顶标高(m)", "层顶标高", false, true],
  [17, "起点底标高(m)", "层底标高", false, true],
  [18, "终点底标高(m)", "层底标高", false, true],
  [19, "备注", "", false, true],
];
const PROP_GROUPS = [
  [20, "钢筋业务属性"],
  [33, "土建业务属性"],
  [40, "显示样式"],
];

function PlusMinus({ plus }) {
  return (
    <button
      aria-label={plus ? "展开" : "收起"}
      className="grid place-items-center size-[13px] shrink-0 rounded-[2px] border border-[#777] bg-white"
    >
      <svg viewBox="0 0 7 7" className="size-[7px]">
        <path d={plus ? "M0 3.500h7M3.500 0v7" : "M1 3.500h5"} stroke="#333" />
      </svg>
    </button>
  );
}

// rebar grade mark between the count and the diameter
function RebarValue({ parts }) {
  return (
    <span className="flex items-center text-[#444]">
      {parts[0]}
      <svg viewBox="0 0 10 10" className="size-[10px] ml-[2px] mb-1" fill="none" stroke="#333">
        <path d="M5 0v10M3.500 1v7M6.500 1v7M1 8.500h8" strokeWidth=".8" />
        <ellipse cx="5" cy="4.500" rx="4" ry="2.500" />
      </svg>
      {parts[1]}
    </span>
  );
}

function PropertyList() {
  const cell = "p-0 h-[21px] border-r border-b border-[#d0d0d2]";
  return (
    <section className="flex flex-col flex-1 min-h-0 border border-[#c5c6cd] bg-white overflow-hidden">
      <DockStrip />
      <DockTabs tabs={["属性列表", "图层管理"]} />
      <div className="flex-1 bg-gradient-to-r from-[#efefef] from-[21px] to-white to-[21px]">
        <table className="table-fixed w-[342px] border-separate border-spacing-0 bg-white leading-5">
          <thead>
            <tr className="bg-[#efefef] text-[#444]">
              <th className={`${cell} w-[22px] bg-[#eaf0f5]`}></th>
              <th className={`${cell} w-[101px] font-normal`}>属性名称</th>
              <th className={`${cell} font-normal`}>属性值</th>
              <th className={`${cell} w-[41px] font-normal`}>附加</th>
            </tr>
          </thead>
          <tbody>
            {PROPS.map(([no, name, value, blue, box, checked]) => (
              <tr key={no}>
                <td className={`${cell} text-center bg-[#efefef] text-[#444]`}>{no}</td>
                <td className={`${cell} pl-[3px] whitespace-nowrap overflow-hidden ${blue ? "text-[#1f5fff]" : ""}`}>{name}</td>
                <td className={`${cell} pl-[3px] whitespace-nowrap overflow-hidden`}>
                  {Array.isArray(value) ? <RebarValue parts={value} /> : value}
                </td>
                <td className={cell}>
                  {box && (
                    <div className="flex justify-center pr-[2px] pb-[2px]">
                      <CheckBox checked={checked} label={`附加 ${name}`} />
                    </div>
                  )}
                </td>
              </tr>
            ))}
            {PROP_GROUPS.map(([no, name]) => (
              <tr key={no}>
                <td className={`${cell} text-center bg-[#efefef] text-[#444]`}>{no}</td>
                <td className={cell}>
                  <div className="flex items-center gap-[5px] pl-[2px] whitespace-nowrap">
                    <PlusMinus plus />
                    {name}
                  </div>
                </td>
                <td className={`${cell} bg-[#ebebeb]`}></td>
                <td className={cell}></td>
              </tr>
            ))}
          </tbody>
        </table>
      </div>
    </section>
  );
}

const GREEN = "#007a00";
const RED = "#e00000";
const PURPLE = "#8c00ff";

const AXIS_X = [851.5, 1049.5, 1225, 1349.5, 1393.5, 1591];
const AXIS_Y = [500.5, 573.5, 748.5, 852, 859.5, 947];

function Bubble({ x, y, text }) {
  return (
    <g>
      <circle cx={x} cy={y} r="12" fill="none" stroke="#008a00" strokeWidth="1" />
      <text x={x} y={y + 6} fill="#fff" fontSize="17" textAnchor="middle">
        {text}
      </text>
    </g>
  );
}

function DimText({ x, y, text, vertical, fill = "#fff", size = 17 }) {
  return (
    <text
      fill={fill}
      fontSize={size}
      textAnchor="middle"
      transform={vertical ? `translate(${x + 6} ${y}) rotate(-90)` : `translate(${x} ${y + 6})`}
    >
      {text}
    </text>
  );
}

function Wall({ x, y, w, h, fill = PURPLE }) {
  return <rect x={x} y={y} width={w} height={h} fill={fill} />;
}

function Drawing() {
  const dark = "#005000";
  const grey = "#cdcdcd";
  return (
    <svg
      viewBox="565 168 1068 842"
      preserveAspectRatio="xMinYMin slice"
      className="block w-full h-full"
      role="img"
      aria-label="三层墙体平面图"
    >
      <defs>
        <clipPath id="sheet">
          <rect x="565" y="168" width="1066" height="839" />
        </clipPath>
      </defs>
      <g clipPath="url(#sheet)">
        <g stroke={GREEN} fill="none">
          {AXIS_X.map((x) => (
            <path key={x} d={`M${x} 195V501`} />
          ))}
          <path d="M852 281H1600M852 390.500H1600M632.500 501V1007M742 501V1007" />
          {AXIS_Y.map((y) => (
            <path key={y} d={`M568 ${y}H852`} />
          ))}
          <path d="M841 292L862 271" />
          {AXIS_X.map((x) => (
            <path key={x} d={`M${x - 10} 401.500L${x + 10} 380.500`} />
          ))}
          <path d="M622 490.500L642 511" />
          {AXIS_Y.map((y) => (
            <path key={y} d={`M732 ${y - 10}L753 ${y + 10}`} />
          ))}
        </g>

        <Wall x={1386} y={493} w={212} h={15} />
        <Wall x={1448} y={493} w={88} h={15} fill={dark} />
        <Wall x={1386} y={508} w={15} h={125} />
        <Wall x={1386} y={530} w={15} h={73} fill={grey} />
        <Wall x={1584} y={508} w={14} h={125} />
        <Wall x={1584} y={530} w={14} h={22} fill={grey} />

        <Wall x={1342} y={844} w={256} h={15} />
        <Wall x={1415} y={844} w={147} h={15} fill={grey} />
        <Wall x={1342} y={859} w={15} h={15} />
        <Wall x={1584} y={859} w={14} h={44} />
        <Wall x={1584} y={903} w={14} h={104} fill={dark} />

        <Wall x={844} y={940} w={418} h={15} />
        <Wall x={896} y={940} w={110} h={15} fill={dark} />
        <Wall x={1057} y={940} w={135} h={15} fill={dark} />
        {[844, 1042, 1218].map((x) => (
          <g key={x}>
            <Wall x={x} y={955} w={15} h={21} />
            <Wall x={x} y={976} w={15} h={31} fill={grey} />
          </g>
        ))}

        <g stroke={RED} fill="none">
          {AXIS_X.map((x) => (
            <path key={x} d={`M${x} 501V${x === 1393.5 ? 852 : 1007}`} />
          ))}
          {AXIS_Y.map((y) => (
            <path key={y} d={`M852 ${y}H1630`} />
          ))}
          <path d="M897.500 947V1007M934.500 952V1007M934 952L925 968M1121.500 947V998.500H1136" />
          <path d="M1583.500 809V794.500H1630M1519 852V1007M1496.500 1006V991.500H1630M1404.500 969V1007M1411.500 969V1007" />
        </g>

        {["1", "2", "4", "6", "7", "8"].map((text, index) => (
          <Bubble key={text} x={AXIS_X[index]} y={183} text={text} />
        ))}
        {["P", "N", "M", "L", "k", "J"].map((text, index) => (
          <g key={text}>
            <Bubble x={580} y={AXIS_Y[index]} text={text} />
            <Bubble x={1618} y={AXIS_Y[index]} text={text} />
          </g>
        ))}
        <Bubble x={852} y={995} text="1" />
        <Bubble x={1108} y={995} text="3" />
        <Bubble x={1320} y={995} text="5" />
        <Bubble x={1591} y={995} text="8" />

        <DimText x={951} y={336} text="2700" />
        <DimText x={1137} y={336} text="2400" />
        <DimText x={1287} y={336} text="1700" />
        <DimText x={1371} y={336} text="600" />
        <DimText x={1492} y={336} text="2700" />
        <DimText x={687} y={537} text="1000" vertical />
        <DimText x={687} y={661} text="2400" vertical />
        <DimText x={687} y={801} text="1400" vertical />
        <DimText x={687} y={856} text="100" vertical />
        <DimText x={687} y={903} text="1200" vertical />
        <DimText x={687} y={1008} text="1650" />

        <g fontWeight="300" fontFamily="'Open Sans', 'Noto Sans CJK SC', sans-serif">
          <DimText x={719} y={823} text="板厚" fill="#00e000" size={12} />
          <DimText x={770} y={823} text="120mm," fill="#00e000" size={15} />
          <DimText x={867} y={823} text="配筋双层双向" fill="#00e000" size={12} />
          <DimText x={967} y={823} text="C8@100" fill="#00e000" size={15} />
          <DimText x={907} y={991} text="C8@100" fill="#12a0a8" size={15} />
          <DimText x={1148} y={983} text="600" fill="#12a0a8" vertical />
          <DimText x={1317} y={980} text="100" fill="#00e000" size={16} />
          <DimText x={1371} y={980} text="600" fill="#00e000" size={16} />
          <DimText x={1308} y={1010} text="150" fill="#00e000" vertical />
        </g>
        <g stroke="#00e000" fill="none">
          <path d="M1165.500 947V1005M1158 954.500H1184M1158 998.500H1184M1160 949l11 11M1160 993l11 11" />
          <path d="M1342 998.500H1408M1349.500 980V1005M1357.500 980V1005M1400.500 980V1005M1344 1004l11-11M1352 1004l11-11M1395 1004l11-11" />
        </g>

        <path d="M618 957V938" stroke="#00f000" strokeWidth="4" />
        <path d="M613 939L618 927L623 939z" fill="#00f000" />
        <path d="M618 957H637" stroke="#f00" strokeWidth="4" />
        <path d="M636 952L649 957L636 962z" fill="#f00" />
        <circle cx="618" cy="957" r="5" fill="#0636a5" />
        <text x="618" y="925" fontSize="14" textAnchor="middle" fill="#00f000">Y</text>
        <text x="654" y="963" fontSize="15" textAnchor="middle" fill="#f00">X</text>
      </g>
    </svg>
  );
}

function ViewCube({ fill = "#8598ad", text, wire }) {
  return (
    <svg viewBox="0 0 24 24" className="size-6" stroke="#2d3a48" fill={fill}>
      <path d="M1.500 6.500h17v16h-17zM1.500 6.500l5-5h16l-4 5zM18.500 6.500l4-5v16l-4 5z" />
      {wire && <path d="M6.500 1.500v16h16M6.500 17.500l-5 5" fill="none" strokeWidth=".6" />}
      {text && (
        <text x="11" y="20" fontSize="9" textAnchor="middle" fill="#2d3a48" stroke="none">
          {text}
        </text>
      )}
    </svg>
  );
}

function ViewTools() {
  return (
    <div className="absolute right-[3px] top-[3px] flex flex-col items-center w-[33px] h-[227px] pt-[6px] bg-[#98989c]">
      <button aria-label="动态观察" className="h-[30px]">
        <svg viewBox="0 0 24 24" className="size-6">
          <circle cx="12" cy="13" r="9" fill="#a9bccb" stroke="#34495c" />
          <path d="M5 12c3-7 8-8 12-5-4 1-8 6-9 11z" fill="#e1eaf0" />
          <circle cx="19" cy="7" r="4" fill="#c8d8e3" stroke="#34495c" />
          <path d="M2 19c6 2 15-3 19-10" fill="none" stroke="#34495c" strokeWidth="1.500" />
          <circle cx="3" cy="19" r="2" fill="#6c8093" />
        </svg>
      </button>
      <button aria-label="三维" className="h-[30px] mb-[2px]"><ViewCube text="3D" /></button>
      <button aria-label="线框" className="flex flex-col items-center h-[39px] gap-[6px]"><ViewCube fill="#cfe6fb" wire /><Caret /></button>
      <button aria-label="实体" className="flex flex-col items-center h-[39px] gap-[6px]"><ViewCube /><Caret /></button>
      <button aria-label="旋转视图" className="flex flex-col items-center h-[39px] gap-[6px]">
        <svg viewBox="0 0 24 24" className="size-6" fill="none" stroke="#2d3a48" strokeWidth="2">
          <path d="M20 6C12-2 1 4 2 13c1 10 13 13 18 6" />
          <path d="M22 2v6h-7" />
        </svg>
        <Caret />
      </button>
      <hr className="w-6 border-[#6e6468]" />
      <button aria-label="显示设置" className="mt-[5px]">
        <svg viewBox="0 0 24 24" className="size-6" fill="#8598ad" stroke="#2d3a48">
          <path d="M.500 3.500l2-3h19l2 3v20H.500z" />
          <path d="M0 3.500h24M12 8v12M3 6l1.500 1.500L7 5M15 6l1.500 1.500L19 5" fill="none" />
          <path d="M4 10h2v2H4zM4 14h2v2H4zM4 18h2v2H4zM14 10h2v2h-2zM14 14h2v2h-2zM14 18h2v2h-2zM8 11h2M8 15h2M8 19h2M18 11h2M18 15h2M18 19h2" fill="none" />
        </svg>
      </button>
    </div>
  );
}

function Canvas() {
  const xRef = useRef();

  useEffect(() => {
    xRef.current.focus();
    xRef.current.select();
  }, []);

  return (
    <main className="relative flex-1 min-w-0 bg-black overflow-hidden">
      <Drawing />
      <div className="absolute left-[365px] top-[317px] flex gap-[10px]">
        <input
          ref={xRef}
          aria-label="X"
          defaultValue="781"
          className="w-[70px] h-[19px] pl-[3px] bg-white outline-none selection:bg-[#3399ff] selection:text-white"
        />
        <output className="w-[70px] h-[19px] pl-[3px] leading-[19px] bg-[#969696] text-black">Y:15969</output>
      </div>
      <ViewTools />
    </main>
  );
}

function Splitter() {
  return (
    <div className="flex items-center w-1 shrink-0 bg-white">
      <div className="w-1 h-[100px] bg-[#5c6876]"></div>
    </div>
  );
}

// level, name, state of the first box (1 on, 0 off, 2 partial)
const LAYERS = [
  [0, "所有构件", 2],
  [1, "轴线", 1],
  [2, "轴网", 1],
  [2, "辅助轴线", 1],
  [1, "柱", 1],
  [2, "柱", 1],
  [2, "构造柱", 1],
  [2, "砌体柱", 1],
  [1, "墙", 2],
  [2, "剪力墙", 1],
  [2, "人防门框墙", 1],
  [2, "砌体墙", 1],
  [2, "砌体加筋", 0],
  [2, "保温墙", 1],
  [2, "暗梁", 0],
  [2, "墙垛", 1],
  [2, "幕墙", 1],
  [1, "门窗洞", 2],
  [2, "门", 1],
  [2, "窗", 1],
  [2, "门联窗", 1],
  [2, "墙洞", 1],
  [2, "带形窗", 1],
  [2, "带形洞", 1],
  [2, "飘窗", 1],
  [2, "老虎窗", 0],
  [2, "过梁", 0],
  [2, "壁龛", 0],
  [1, "梁", 2],
  [2, "梁", 0],
  [2, "连梁", 1],
  [2, "圈梁", 0],
  [1, "板", 0],
  [2, "现浇板", 0],
];

function LayerName({ level, name, last }) {
  return (
    <div className={`flex items-center h-5 whitespace-nowrap ${level === 0 ? "pl-px" : ""}`}>
      {level > 0 && <span className="w-2 h-full border-r border-[#ccc]"></span>}
      {level === 1 && <span className="w-[3px] h-px bg-[#ccc]"></span>}
      {level === 2 && (
        <>
          <span className={`w-[10px] border-r border-[#ccc] self-start ${last ? "h-[10px]" : "h-full"}`}></span>
          <span className="w-4 h-px bg-[#ccc]"></span>
        </>
      )}
      {level < 2 && <PlusMinus />}
      <span className="pl-[6px]">{name}</span>
    </div>
  );
}

function DisplaySettings() {
  const cell = "p-0 h-[21px] border-r border-b border-[#d0d0d2]";
  return (
    <aside className="flex flex-col w-[283px] shrink-0 bg-[#efefef] border-x border-b border-[#c5c6cd]">
      <DockStrip />
      <h2 className="h-[22px] leading-[21px] pl-2 border-b border-[#c5c6cd] text-[#555]">显示设置</h2>
      <div className="flex items-end gap-[3px] h-[31px] pl-[2px] border-b border-[#c5c6cd]">
        <button className="w-[61px] h-[26px] -mb-px rounded-t-[3px] border border-b-0 border-[#c5c6cd] bg-white text-[#1f7fe0]">
          图元显示
        </button>
        <button className="w-[60px] h-[23px] rounded-t-[3px] bg-[#dfdfe1] text-[#555]">楼层显示</button>
      </div>
      <div className="flex mt-px ml-[2px] mr-[3px] border border-[#c5c6cd] bg-white">
        <table className="flex-1 table-fixed border-separate border-spacing-0 leading-5">
          <thead>
            <tr className="text-[#444]">
              <th className={`${cell} w-[135px] font-normal bg-[#efefef]`}>图层构件</th>
              <th className={`${cell} w-[63px] font-medium bg-[#6fb3f7] text-white border-[#4c9fff]`}>显示图元</th>
              <th className={`${cell} w-[63px] font-normal bg-[#efefef]`}>显示名称</th>
            </tr>
          </thead>
          <tbody>
            {LAYERS.map(([level, name, state], index) => (
              <tr key={index}>
                <td className={cell}>
                  <LayerName level={level} name={name} last={LAYERS[index + 1]?.[0] === 1} />
                </td>
                <td className={`${cell} ${name === "板" ? "outline-2 -outline-offset-1 outline-[#808086]" : ""}`}>
                  <div className="flex justify-center pb-px">
                    <CheckBox checked={state === 1} partial={state === 2} label={`显示图元 ${name}`} />
                  </div>
                </td>
                <td className={cell}>
                  <div className="flex justify-center pb-px">
                    <CheckBox disabled={index > 0 && index < 4} label={`显示名称 ${name}`} />
                  </div>
                </td>
              </tr>
            ))}
          </tbody>
        </table>
        <div className="flex flex-col items-center w-[14px] py-[3px]">
          <Caret className="rotate-180" />
          <div className="w-2 h-[248px] mt-[3px] rounded-full bg-[#cdcdcd]"></div>
          <Caret className="mt-auto" />
        </div>
      </div>
      <button className="self-end w-[90px] h-[26px] mt-[6px] mr-[8px] rounded-[3px] border border-[#c0cad6] bg-[#fafbfc] text-[#333]">
        恢复默认设置
      </button>
    </aside>
  );
}

function StatusButton({ on, className, children }) {
  return (
    <button
      className={`flex items-center justify-center gap-[6px] h-[25px] border ${
        on ? "bg-white border-[#2a93f5]" : "bg-[#cfcfd1] border-[#98989a]"
      } ${className}`}
    >
      {children}
    </button>
  );
}

function StatusBar() {
  return (
    <footer className="flex items-center h-[30px] bg-[#dfdfe2] border-b border-white pt-px pl-[2px] pr-[13px] text-[#333] whitespace-nowrap">
      <span className="w-[263px]">X = 781 Y = 15969</span>
      <span className="w-10">层高：</span>
      <span className="w-[43px]">2.9</span>
      <span className="w-10">标高：</span>
      <span className="w-[93px]">5.75~8.65</span>
      <span className="w-[103px]">0</span>
      <span className="w-[103px]">隐藏：0</span>
      <StatusButton className="w-[25px]">
        <svg viewBox="0 0 16 16" className="size-4" fill="none" stroke="#444">
          <path d="M2.500 1v12.500H16M2.500 9.500h4v4" />
        </svg>
      </StatusButton>
      <StatusButton on className="w-[36px] ml-[3px]">
        <svg viewBox="0 0 16 16" className="size-4" fill="none">
          <path d="M2.500 2.500h12v12h-12z" stroke={B} />
          <path d="M0 0h5v5H0z" fill="#f9b568" stroke={O} />
        </svg>
        <Caret />
      </StatusButton>
      <StatusButton className="w-[25px] ml-[6px]">
        <svg viewBox="0 0 16 16" className="size-4" fill="none" stroke="#444">
          <path d="M0 1l16 14M16 1L0 15" />
          <path d="M7 7h2v2H7z" fill="#444" />
        </svg>
      </StatusButton>
      <StatusButton className="w-[36px] ml-[3px]">
        <svg viewBox="0 0 16 16" className="size-4" fill="none" stroke="#444">
          <path d="M11 1L1 13.500h15" />
          <circle cx="7" cy="7" r="1.500" fill="#444" />
        </svg>
        <Caret />
      </StatusButton>
      <StatusButton on className="w-[36px] ml-[3px]">
        <svg viewBox="0 0 16 16" className="size-4" fill="none">
          <path d="M0 5h8M4 1v8" stroke={B} strokeWidth="1.300" />
          <path d="M6 11h10v4H6z" fill={B} />
        </svg>
        <Caret />
      </StatusButton>
      <StatusButton on className="w-[73px] ml-[3px]">跨图层选择</StatusButton>
      <StatusButton className="w-[61px] ml-[3px]">折线选择</StatusButton>
      <span className="ml-[6px]">指定第一点</span>
      <span className="ml-auto">166.667 FPS</span>
    </footer>
  );
}

function IeIcon({ ring = "#d9efff" }) {
  return (
    <svg viewBox="0 0 32 32" className="size-8" fill="none">
      <path d="M25 20c-2 8-17 8-17-4s17-12 17 1H9" stroke="#2fa4ee" strokeWidth="5" />
      <path d="M4 29C-3 24 20-3 29 3c3 2 1 6-1 9" stroke={ring} strokeWidth="2.500" />
    </svg>
  );
}

function SwirlIcon({ className = "size-8" }) {
  return (
    <svg viewBox="0 0 32 32" className={`${className} shrink-0`}>
      <path
        d="M30 3c-3 7-8 6-13 6-6 1-9 6-8 11 1 5 8 6 10 2 1-3-1-5-4-4 1-4 8-5 10 0 2 6-3 12-10 12C6 30 1 23 2 16 3 8 9 3 17 3c5 0 9 2 13 0z"
        fill="#22a2ee"
        stroke="#0b6fc8"
      />
    </svg>
  );
}

function PenguinIcon({ className = "size-8" }) {
  return (
    <svg viewBox="0 0 32 32" className={`${className} shrink-0`}>
      <ellipse cx="16" cy="19" rx="11" ry="11" fill="#111" />
      <ellipse cx="16" cy="10" rx="8" ry="9" fill="#111" />
      <ellipse cx="16" cy="22" rx="7" ry="8" fill="#fff" />
      <ellipse cx="13" cy="8" rx="2" ry="2.500" fill="#fff" />
      <ellipse cx="19" cy="8" rx="2" ry="2.500" fill="#fff" />
      <circle cx="13.500" cy="8.500" r="1" />
      <circle cx="18.500" cy="8.500" r="1" />
      <path d="M11 12c3-1.500 7-1.500 10 0-3 2-7 2-10 0z" fill="#f7a61d" />
      <path d="M7 15c6 3 12 3 18 0v3c-4 2-9 2-12 1.500V24h-3v-5l-3-1z" fill="#e3202b" />
      <path d="M6 29h9v2H6zM17 29h9v2h-9z" fill="#f7a61d" />
    </svg>
  );
}

function WechatIcon({ className = "size-8" }) {
  return (
    <svg viewBox="0 0 32 32" className={`${className} shrink-0`}>
      <path d="M12 3C5 3 0 8 0 13c0 3 2 6 4 7l-1 4 4-2c8 2 17-2 17-9 0-6-6-10-12-10z" fill="#86d94b" />
      <circle cx="8" cy="10" r="1.500" fill="#2d5a12" />
      <circle cx="15" cy="10" r="1.500" fill="#2d5a12" />
      <path d="M22 13c-6 0-10 4-10 8s5 8 11 7.500l4 2-1-3.500c3-1.500 5-3.500 5-6 0-4-4-8-9-8z" fill="#f1f1f1" />
      <circle cx="19" cy="19" r="1.300" fill="#666" />
      <circle cx="25" cy="19" r="1.300" fill="#666" />
    </svg>
  );
}

function RedQIcon({ className = "size-8" }) {
  return (
    <svg viewBox="0 0 32 32" className={`${className} shrink-0`} fill="none">
      <rect width="32" height="32" rx="4" fill="#ee0a1b" />
      <path d="M13.500 21C8 18 10 9 16 9s8 9 2.500 12M17 19l4 5M11 22h4" stroke="#fff" strokeWidth="3" />
    </svg>
  );
}

function TaskButton({ active, label, children }) {
  return (
    <button
      aria-label={label}
      className={`grid place-items-center w-[59px] h-[38px] rounded-[3px] border ${
        active
          ? "border-white/80 bg-gradient-to-br from-white/80 to-[#8d7f8a]/80"
          : "border-white/50 bg-gradient-to-b from-white/40 to-white/10"
      }`}
    >
      {children}
    </button>
  );
}

function TaskBar() {
  return (
    <div className="flex items-center h-10 border-t border-[#3b3f49] text-white bg-[linear-gradient(90deg,#5b6f82_0%,#2c3846_4%,#3d4a5a_10%,#1e232c_13%,#4a4a55_16%,#5a4450_20%,#5a3d48_30%,#523540_45%,#55363f_68%,#6b4a50_73%,#44434c_77%,#20242c_81%,#1d222a_83%,#566779_86%,#7d93ab_89%,#5c6c7e_92%,#6f859c_96%,#4b5c70_100%)]">
      <button aria-label="开始" className="ml-[9px]">
        <svg viewBox="0 0 38 38" className="size-[38px]">
          <defs>
            <radialGradient id="orb" cx=".5" cy=".9" r=".9">
              <stop offset="0" stopColor="#5fd0f5" />
              <stop offset=".5" stopColor="#1d5f9c" />
              <stop offset="1" stopColor="#b5cbdc" />
            </radialGradient>
          </defs>
          <circle cx="19" cy="19" r="18" fill="url(#orb)" stroke="#1c3a5a" />
          <path d="M10 12c3-2 5-2 8 0l-1 7c-3-2-5-2-8 0z" fill="#f0622c" />
          <path d="M20 12c3 2 5 2 8 0l-1 7c-3 2-5 2-8 0z" fill="#8cc63f" />
          <path d="M9 21c3-2 5-2 8 0l-1 7c-3-2-5-2-8 0z" fill="#3fa4ea" />
          <path d="M19 21c3 2 5 2 8 0l-1 7c-3 2-5 2-8 0z" fill="#fcc729" />
        </svg>
      </button>
      <div className="flex items-center gap-[29px] ml-[22px] w-[235px]">
        <IeIcon />
        <span className="flex w-[34px]">
          <SwirlIcon />
          <svg viewBox="0 0 14 16" className="w-[14px] h-4 -ml-2 shrink-0">
            <path d="M7 0C3 1 3 5 2.500 10L0 13h14l-2.500-3C11 5 11 1 7 0zM5 13h4l-2 3z" fill="#f9a61c" />
          </svg>
        </span>
        <IeIcon ring="#f6b32c" />
        <PenguinIcon />
      </div>
      <div className="flex gap-[3px]">
        <TaskButton label="浏览器">
          <svg viewBox="0 0 32 32" className="size-8" fill="none">
            <circle cx="16" cy="15" r="11" stroke="#1e8df2" strokeWidth="6" />
            <path d="M18 30c-4 0-4-6 1-6 1-5 7-5 8 0 5 0 5 6 1 6z" fill="#fff" />
          </svg>
        </TaskButton>
        <TaskButton label="资源管理器">
          <svg viewBox="0 0 32 32" className="size-8">
            <path d="M1 5h12l2 3h15v20H1z" fill="#e8c766" />
            <path d="M3 3h5v5H3zM12 4h7v4h-7z" fill="#f6f2da" stroke="#b99a3d" />
            <path d="M1 9h30v19H1z" fill="#f7e29a" stroke="#d6b24f" />
            <path d="M5 31V20c0-3 22-3 22 0v11h-5v-7H10v7z" fill="#8ccbf0" stroke="#3f8fc4" />
          </svg>
        </TaskButton>
        <TaskButton label="Q"><RedQIcon /></TaskButton>
        <TaskButton active label="GTJ">
          <svg viewBox="0 0 32 32" className="size-8">
            <rect width="32" height="32" rx="6" fill="#2f86e4" />
            <path d="M6 8h20v5h-2l-1-1h-4l1 14h-8l1-14H9l-1 1H6z" fill="#fff" />
          </svg>
        </TaskButton>
        <TaskButton label="广联达"><SwirlIcon /></TaskButton>
        <TaskButton label="微信"><WechatIcon /></TaskButton>
      </div>
      <div className="flex items-center gap-2 ml-auto">
        <svg viewBox="0 0 16 16" className="size-4" fill="none" stroke="#ddd">
          <path d="M.500 7.500h15v7H.500z" fill="#888" />
          <path d="M2 10h12M2 12h12" strokeDasharray="1 1" />
          <path d="M5 7c0-4 4-1 5-5" />
        </svg>
        <svg viewBox="0 0 10 18" className="w-[10px] h-[18px] mr-[5px] mb-2" fill="none" stroke="#fff">
          <path d="M3.500 2.500v-2h6v4h-3M.500 2.500h6v4h-6z" />
          <path d="M2 14h5l-2.500 3z" fill="#fff" stroke="none" />
        </svg>
        <svg viewBox="0 0 16 16" className="size-4">
          <path d="M4 0h8v5H4z" fill="#e6e6e6" stroke="#777" />
          <path d="M2 5h12v10H2z" fill="#2d8fe0" />
          <path d="M8 6v8M5.500 9v2l5 1V9" stroke="#fff" fill="none" />
        </svg>
        <svg viewBox="0 0 16 16" className="size-4">
          <ellipse cx="8" cy="8" rx="5" ry="7.500" fill="#1357c4" />
          <path d="M5.500 5.500l5 5L8 13V3l2.500 2.500-5 5" stroke="#fff" fill="none" />
        </svg>
        <RedQIcon className="size-4" />
        <svg viewBox="0 0 16 16" className="size-4">
          <path d="M1 1c5 1 9 1 14 0 1 8-2 12-7 15C3 13 0 9 1 1z" fill="#fff" />
          <path d="M2.500 3c4 .500 7 .500 11 0 0 5-1 8-5.500 11C3.500 11 2.500 8 2.500 3z" fill="#2c7be5" />
          <path d="M4 6l4 4 4-4" stroke="#fff" strokeWidth="2" fill="none" />
        </svg>
        <svg viewBox="0 0 16 16" className="size-4">
          <path d="M6 1h4L4 15H0z" fill="#2a9d6f" />
          <path d="M6 1h4l6 14h-5z" fill="#1c6fd0" />
        </svg>
        <WechatIcon className="size-4" />
        <SwirlIcon className="size-4" />
        <svg viewBox="0 0 16 16" className="size-4" fill="none" stroke="#fff" strokeWidth="1.300">
          <path d="M5.500 10V2.500c0-2 3-2 3 0V10c3 2 1 5-1.500 5s-4-3-1.500-5zM7 6v6M11 3h2M11 6h2" />
        </svg>
        <svg viewBox="0 0 16 16" className="size-4">
          <path d="M2 0h5v4h1v6L5 12v4H4v-4L1 10V4h1z" fill="#777" />
          <circle cx="11" cy="11" r="5" fill="#2da832" />
          <path d="M8.500 11l2 2 3-4" stroke="#fff" strokeWidth="1.500" fill="none" />
        </svg>
        <PenguinIcon className="size-4" />
        <svg viewBox="0 0 16 16" className="size-4">
          <path d="M2 5h3l4-4v14l-4-4H2z" fill="#fff" />
          <path d="M11 5c1.500 2 1.500 4 0 6M13 3c2.500 3 2.500 7 0 10" stroke="#ccd6e0" fill="none" />
        </svg>
        <svg viewBox="0 0 16 16" className="size-4" fill="none" stroke="#fff">
          <path d="M5.500 4.500h10v8h-10zM8 15h6M11 13v2M1 1v4h3V1M2.500 5v9.500H6" strokeWidth="1.200" />
        </svg>
      </div>
      <div className="w-[84px] text-center leading-[18px]">
        <p>16:40</p>
        <p>2019/7/22</p>
      </div>
      <button aria-label="显示桌面" className="w-[14px] h-full border border-white/50 bg-gradient-to-b from-white/40 to-white/10"></button>
    </div>
  );
}

function App() {
  return (
    <div className="flex flex-col h-screen overflow-hidden bg-white text-black text-[12px] leading-4 font-['Noto_Sans','Noto_Sans_CJK_SC',sans-serif]">
      <Header />
      <Ribbon />
      <OptionsBar />
      <div className="relative flex flex-1 min-h-0">
        <NavTree />
        <div className="flex flex-col gap-1 w-[345px] ml-1 shrink-0">
          <ComponentList />
          <PropertyList />
        </div>
        <Splitter />
        <Canvas />
        <Splitter />
        <DisplaySettings />
        <div className="absolute right-0 top-[576px] w-[10px] h-[60px] pl-[4px] py-1 rounded-l-[3px] bg-[#39424e]">
          <div className="w-[5px] h-full bg-[repeating-linear-gradient(180deg,transparent_0px,transparent_1px,#39424e_1px,#39424e_2px),linear-gradient(180deg,#f08040,#f0d040,#60c090,#40a0e0)]"></div>
        </div>
      </div>
      <StatusBar />
      <TaskBar />
    </div>
  );
}

export default App;
